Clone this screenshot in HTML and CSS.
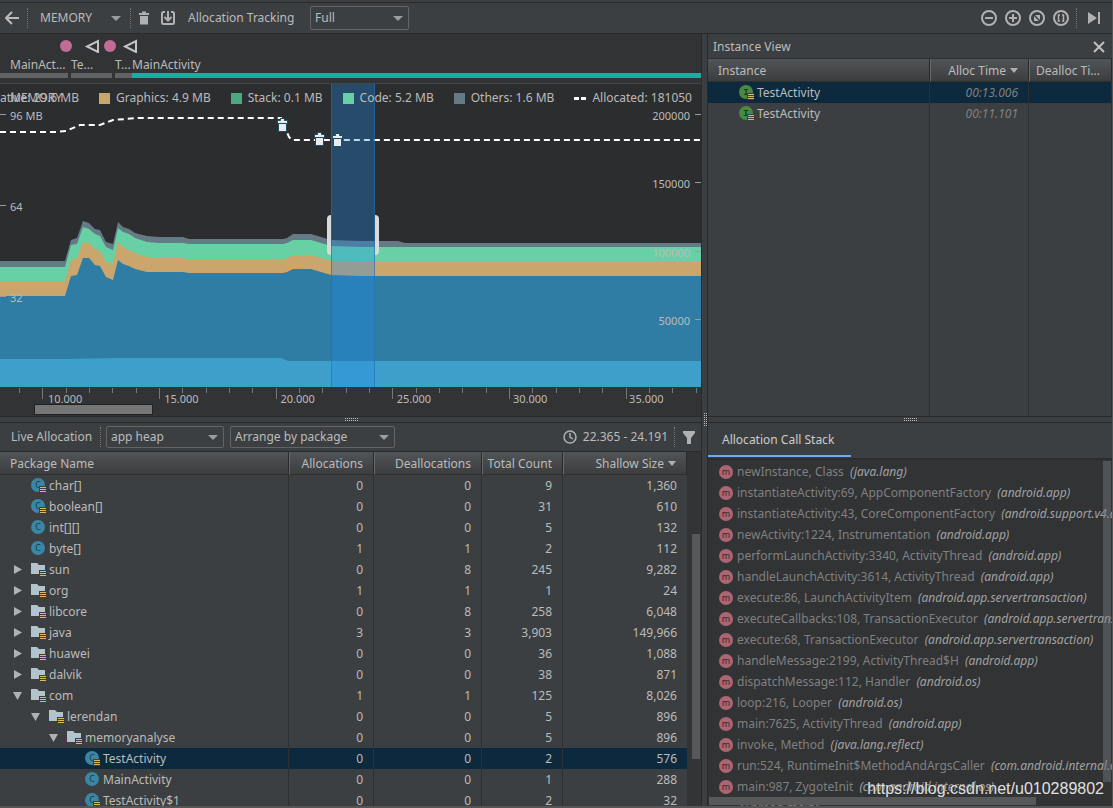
FILE: index.html
```html
<!DOCTYPE html>
<html lang="en">
<head>
  <meta charset="UTF-8" />
  <meta name="viewport" content="width=device-width, initial-scale=1.0"/>
  <title>Memory Profiler</title>
  <link rel="stylesheet" href="styles.css">
</head>
<body>
  <!-- Icon set -->
  <svg class="defs" aria-hidden="true">
    <symbol id="i-class" viewBox="0 0 15 15">
      <circle cx="7" cy="7" r="7" fill="#3a86a5"/>
      <text x="7" y="10" class="glyph" fill="#1f3a47">C</text>
    </symbol>
    <symbol id="i-lines" viewBox="0 0 15 15">
      <path d="M8 8h7v7H8z" fill="#3c3f41"/>
      <path d="M9 9.500h6M9 11.500h6M9 13.500h6" stroke="#e6b45f" fill="none"/>
    </symbol>
    <symbol id="i-folder" viewBox="0 0 15 15">
      <path d="M0 1h6l2 2h6v9H0z" fill="#b3c3cb"/>
    </symbol>
    <symbol id="i-inst" viewBox="0 0 15 15">
      <circle cx="7" cy="7" r="7" fill="#4a8a40"/>
      <text x="7" y="10" class="glyph mono" fill="#1f3a1d">I</text>
    </symbol>
    <symbol id="i-method" viewBox="0 0 14 14">
      <circle cx="7" cy="7" r="7" fill="#ac6572"/>
      <text x="7" y="10" class="glyph" fill="#3a2629">m</text>
    </symbol>
    <symbol id="i-trash" viewBox="0 0 10 14">
      <path d="M0 2h3V0.500h4V2h3v2H0zM1 5h8v8.500H1z"/>
    </symbol>
    <symbol id="i-open" viewBox="0 0 9 9"><path d="M0 1h9L4.500 9z" fill="#afb1b3"/></symbol>
    <symbol id="i-closed" viewBox="0 0 9 9"><path d="M1 0l8 4.500L1 9z" fill="#afb1b3"/></symbol>
  </svg>

  <div class="app">
    <div class="strip"></div>

    <header class="toolbar">
      <button class="icon-btn" aria-label="Back">
        <svg width="14" height="14" viewBox="0 0 14 14"><path d="M14 7H1.500M7 1L1 7l6 6" fill="none" stroke="#bbb" stroke-width="2"/></svg>
      </button>
      <span class="sep"></span>
      <label class="combo plain">
        <select aria-label="Profiler"><option>MEMORY</option></select>
      </label>
      <span class="sep"></span>
      <button class="icon-btn" aria-label="Force garbage collection">
        <svg width="10" height="14" fill="#afb1b3"><use href="#i-trash"/></svg>
      </button>
      <button class="icon-btn" aria-label="Dump Java heap">
        <svg width="14" height="14" viewBox="0 0 14 14" fill="none" stroke="#afb1b3" stroke-width="2"><path d="M4 1H2.500Q1 1 1 2.500v9Q1 13 2.500 13h9q1.500 0 1.500-1.500v-9Q13 1 11.500 1H10M7 0v9M3.500 6L7 9.500 10.500 6"/></svg>
      </button>
      <label for="tracking" class="tracking">Allocation Tracking</label>
      <span class="combo full"><select id="tracking"><option>Full</option></select></span>
      <div class="zoom-tools">
        <button class="icon-btn" aria-label="Zoom out">
          <svg width="16" height="16" viewBox="0 0 16 16" class="line"><circle cx="8" cy="8" r="7"/><path d="M4 8h8"/></svg>
        </button>
        <button class="icon-btn" aria-label="Zoom in">
          <svg width="16" height="16" viewBox="0 0 16 16" class="line"><circle cx="8" cy="8" r="7"/><path d="M4 8h8M8 4v8"/></svg>
        </button>
        <button class="icon-btn" aria-label="Reset zoom">
          <svg width="16" height="16" viewBox="0 0 16 16" class="line"><circle cx="8" cy="8" r="7"/><path d="M5 6v5h5zM6 5h5v5z" fill="#afb1b3" stroke="none"/></svg>
        </button>
        <button class="icon-btn" aria-label="Zoom to selection">
          <svg width="16" height="16" viewBox="0 0 16 16" class="line"><circle cx="8" cy="8" r="7"/><path d="M7 5H5.500v6H7M9 5h1.500v6H9" stroke-width="1.500"/></svg>
        </button>
        <span class="sep"></span>
        <button class="icon-btn live" aria-label="Go live">
          <svg width="13" height="12" viewBox="0 0 13 12" fill="#afb1b3"><path d="M0 0l9 6-9 6zM10 0h2v12h-2z"/></svg>
        </button>
      </div>
    </header>

    <main class="main">
      <section class="col">
        <div class="upper stage">
          <div class="lanes">
            <svg class="events" width="140" height="14" viewBox="0 0 140 14">
              <circle cx="66" cy="7" r="6" fill="#c06c94"/>
              <circle cx="110" cy="7" r="6" fill="#c06c94"/>
              <path d="M98 2v11L87 7.500zM136 2v11L125 7.500z" fill="none" stroke="#c4c4c4" stroke-width="2"/>
            </svg>
            <div class="acts">
              <div class="act a1">MainAct...</div>
              <div class="act a2">Te...</div>
              <div class="act a3">T...</div>
              <div class="act a4">MainActivity</div>
            </div>
          </div>

          <div class="chart">
            <svg class="plot" viewBox="0 0 701 303" preserveAspectRatio="none">
              <path fill="#647a84" d="M0 177H65L71 156 77 154 83 137 89 139 95 145 100 146 106 158 113 160 118 138 123 143 129 145 135 149 147 152 159 153H183L189 155H283L287 154 293 150H311L331 156 360 157H398L405 159H701V303H0z"/>
              <path fill="#67d1a5" d="M0 183H65L71 161 77 160 83 143 89 145 95 150 100 152 106 163 113 166 118 144 123 148 129 150 135 154 147 158 159 159H183L189 160H283L287 159 293 156H311L331 162 360 163H701V303H0z"/>
              <path fill="#caa66c" d="M0 197H65L71 176 77 174 83 158 89 159 95 165 100 167 106 178 113 180 118 158 123 163 129 166 135 169 147 173 159 174H183L189 175H283L287 174 293 171H311L331 177 360 178H701V303H0z"/>
              <path fill="#2f7da4" d="M0 212H65L71 192 77 191 83 174H89L95 181 100 182 106 193 113 196 118 176 123 180 129 182 135 185 147 188H183L189 189H283L287 188 293 185H311L331 191 360 192H701V303H0z"/>
              <path fill="#3e9fcb" d="M0 275H65L118 274H281L288 277H701V303H0z"/>
              <path d="M0 48H55L66 47 80 41H100L113 36 138 34H281L289 53 292 56H701" fill="none" stroke="#fff" stroke-width="2" stroke-dasharray="6 4"/>
              <path fill="#1f8bec" fill-opacity=".32" d="M331 0h44v303h-44z"/>
              <path fill="none" stroke="#1f6fb0" stroke-opacity=".6" d="M331.500 0v303M374.500 0v303"/>
              <path fill="#dadada" d="M331 131v40q-4 0-4-4v-32q0-4 4-4zM375 131v40q4 0 4-4v-32q0-4-4-4z"/>
              <g fill="#e8ecef" stroke="#1d4d63">
                <path d="M277.500 36.500h3v-2h4v2h3v3h-1v8h-8v-8h-1zM278 39.500h9"/>
                <path d="M314.500 50.500h3v-2h4v2h3v3h-1v8h-8v-8h-1zM315 53.500h9"/>
                <path d="M332.500 51.500h3v-2h4v2h3v3h-1v8h-8v-8h-1zM333 54.500h9"/>
              </g>
            </svg>
            <div class="chart-title">MEMORY</div>
            <div class="legend">
              <span class="key native">Native: 29.6 MB</span>
              <span class="key graphics">Graphics: 4.9 MB</span>
              <span class="key stack">Stack: 0.1 MB</span>
              <span class="key code">Code: 5.2 MB</span>
              <span class="key others">Others: 1.6 MB</span>
              <span class="key allocated">Allocated: 181050</span>
            </div>
            <div class="y-axis left">
              <span>96 MB</span><span>64</span><span>32</span>
            </div>
            <div class="y-axis right">
              <span>200000</span><span>150000</span><span>100000</span><span>50000</span>
            </div>
          </div>

          <div class="x-axis">
            <svg class="ticks" viewBox="0 0 701 12" preserveAspectRatio="none">
              <path stroke="#777" fill="none" d="M19.500 0v5M42.500 0v11M66.500 0v5M89.500 0v5M112.500 0v5M136.500 0v5M159.500 0v11M182.500 0v5M206.500 0v5M229.500 0v5M252.500 0v5M276.500 0v11M299.500 0v5M322.500 0v5M346.500 0v5M369.500 0v5M392.500 0v11M416.500 0v5M439.500 0v5M462.500 0v5M486.500 0v5M509.500 0v11M532.500 0v5M556.500 0v5M579.500 0v5M602.500 0v5M626.500 0v11M649.500 0v5M672.500 0v5M696.500 0v5"/>
            </svg>
            <div class="times">
              <span>10.000</span><span>15.000</span><span>20.000</span><span>25.000</span><span>30.000</span><span>35.000</span>
            </div>
            <div class="thumb"></div>
          </div>
        </div>

        <div class="splitter"><i></i></div>

        <div class="lower">
          <div class="bar">
            <span class="bar-title">Live Allocation</span>
            <span class="sep"></span>
            <span class="combo heap"><select aria-label="Heap"><option>app heap</option></select></span>
            <span class="combo arrange"><select aria-label="Arrange"><option>Arrange by package</option></select></span>
            <span class="range">
              <svg width="14" height="14" viewBox="0 0 14 14" fill="none" stroke="#afb1b3" stroke-width="1.500"><circle cx="7" cy="7" r="6"/><path d="M7 3v4l3 2"/></svg>
              22.365 - 24.191
            </span>
            <span class="sep"></span>
            <button class="icon-btn" aria-label="Filter">
              <svg width="12" height="13" viewBox="0 0 12 13" fill="#afb1b3"><path d="M0 0h12v2L8 7v6H4V7L0 2z"/></svg>
            </button>
          </div>
          <div class="grid-wrap">
            <table class="grid heap-grid">
              <colgroup><col><col class="w-alloc"><col class="w-dealloc"><col class="w-total"><col class="w-size"></colgroup>
              <thead>
                <tr><th>Package Name</th><th>Allocations</th><th>Deallocations</th><th>Total Count</th><th class="sorted">Shallow Size</th></tr>
              </thead>
              <tbody>
                <tr><td><div class="node"><i></i><svg><use href="#i-class"/><use href="#i-lines"/></svg>char[]</div></td><td>0</td><td>0</td><td>9</td><td>1,360</td></tr>
                <tr><td><div class="node"><i></i><svg><use href="#i-class"/><use href="#i-lines"/></svg>boolean[]</div></td><td>0</td><td>0</td><td>31</td><td>610</td></tr>
                <tr><td><div class="node"><i></i><svg><use href="#i-class"/></svg>int[][]</div></td><td>0</td><td>0</td><td>5</td><td>132</td></tr>
                <tr><td><div class="node"><i></i><svg><use href="#i-class"/></svg>byte[]</div></td><td>1</td><td>1</td><td>2</td><td>112</td></tr>
                <tr><td><div class="node"><button aria-label="Expand sun"><svg><use href="#i-closed"/></svg></button><svg><use href="#i-folder"/><use href="#i-lines"/></svg>sun</div></td><td>0</td><td>8</td><td>245</td><td>9,282</td></tr>
                <tr><td><div class="node"><button aria-label="Expand org"><svg><use href="#i-closed"/></svg></button><svg><use href="#i-folder"/><use href="#i-lines"/></svg>org</div></td><td>1</td><td>1</td><td>1</td><td>24</td></tr>
                <tr><td><div class="node"><button aria-label="Expand libcore"><svg><use href="#i-closed"/></svg></button><svg><use href="#i-folder"/><use href="#i-lines"/></svg>libcore</div></td><td>0</td><td>8</td><td>258</td><td>6,048</td></tr>
                <tr><td><div class="node"><button aria-label="Expand java"><svg><use href="#i-closed"/></svg></button><svg><use href="#i-folder"/><use href="#i-lines"/></svg>java</div></td><td>3</td><td>3</td><td>3,903</td><td>149,966</td></tr>
                <tr><td><div class="node"><button aria-label="Expand huawei"><svg><use href="#i-closed"/></svg></button><svg><use href="#i-folder"/><use href="#i-lines"/></svg>huawei</div></td><td>0</td><td>0</td><td>36</td><td>1,088</td></tr>
                <tr><td><div class="node"><button aria-label="Expand dalvik"><svg><use href="#i-closed"/></svg></button><svg><use href="#i-folder"/><use href="#i-lines"/></svg>dalvik</div></td><td>0</td><td>0</td><td>38</td><td>871</td></tr>
                <tr><td><div class="node"><button aria-label="Collapse com"><svg><use href="#i-open"/></svg></button><svg><use href="#i-folder"/><use href="#i-lines"/></svg>com</div></td><td>1</td><td>1</td><td>125</td><td>8,026</td></tr>
                <tr><td><div class="node l1"><button aria-label="Collapse lerendan"><svg><use href="#i-open"/></svg></button><svg><use href="#i-folder"/><use href="#i-lines"/></svg>lerendan</div></td><td>0</td><td>0</td><td>5</td><td>896</td></tr>
                <tr><td><div class="node l2"><button aria-label="Collapse memoryanalyse"><svg><use href="#i-open"/></svg></button><svg><use href="#i-folder"/><use href="#i-lines"/></svg>memoryanalyse</div></td><td>0</td><td>0</td><td>5</td><td>896</td></tr>
                <tr class="selected"><td><div class="node l3"><i></i><svg><use href="#i-class"/><use href="#i-lines"/></svg>TestActivity</div></td><td>0</td><td>0</td><td>2</td><td>576</td></tr>
                <tr><td><div class="node l3"><i></i><svg><use href="#i-class"/></svg>MainActivity</div></td><td>0</td><td>0</td><td>1</td><td>288</td></tr>
                <tr><td><div class="node l3"><i></i><svg><use href="#i-class"/><use href="#i-lines"/></svg>TestActivity$1</div></td><td>0</td><td>0</td><td>2</td><td>32</td></tr>
              </tbody>
            </table>
            <div class="vscroll"><div></div></div>
          </div>
        </div>
      </section>

      <div class="vsplitter"><i></i></div>

      <section class="col">
        <div class="upper">
          <div class="pane-title">
            <span>Instance View</span>
            <button class="icon-btn" aria-label="Close">
              <svg width="12" height="12" viewBox="0 0 12 12"><path d="M1 1l10 10M11 1L1 11" stroke="#c0c0c0" stroke-width="2"/></svg>
            </button>
          </div>
          <table class="grid inst-grid">
            <colgroup><col><col class="w-time"><col class="w-dtime"></colgroup>
            <thead>
              <tr><th>Instance</th><th class="sorted">Alloc Time</th><th class="start">Dealloc Ti...</th></tr>
            </thead>
            <tbody>
              <tr class="selected"><td><div class="node"><svg><use href="#i-inst"/><use href="#i-lines"/></svg>TestActivity</div></td><td>00:13.006</td><td></td></tr>
              <tr><td><div class="node"><svg><use href="#i-inst"/><use href="#i-lines"/></svg>TestActivity</div></td><td>00:11.101</td><td></td></tr>
              <tr class="fill"><td></td><td></td><td></td></tr>
            </tbody>
          </table>
        </div>

        <div class="splitter"><i></i></div>

        <div class="lower">
          <div class="tabs"><button class="tab">Allocation Call Stack</button></div>
          <div class="stack-pane">
            <ul class="frames">
              <li><svg><use href="#i-method"/></svg>newInstance, Class <em>(java.lang)</em></li>
              <li><svg><use href="#i-method"/></svg>instantiateActivity:69, AppComponentFactory <em>(android.app)</em></li>
              <li><svg><use href="#i-method"/></svg>instantiateActivity:43, CoreComponentFactory <em>(android.support.v4.app)</em></li>
              <li><svg><use href="#i-method"/></svg>newActivity:1224, Instrumentation <em>(android.app)</em></li>
              <li><svg><use href="#i-method"/></svg>performLaunchActivity:3340, ActivityThread <em>(android.app)</em></li>
              <li><svg><use href="#i-method"/></svg>handleLaunchActivity:3614, ActivityThread <em>(android.app)</em></li>
              <li><svg><use href="#i-method"/></svg>execute:86, LaunchActivityItem <em>(android.app.servertransaction)</em></li>
              <li><svg><use href="#i-method"/></svg>executeCallbacks:108, TransactionExecutor <em>(android.app.servertransaction)</em></li>
              <li><svg><use href="#i-method"/></svg>execute:68, TransactionExecutor <em>(android.app.servertransaction)</em></li>
              <li><svg><use href="#i-method"/></svg>handleMessage:2199, ActivityThread$H <em>(android.app)</em></li>
              <li><svg><use href="#i-method"/></svg>dispatchMessage:112, Handler <em>(android.os)</em></li>
              <li><svg><use href="#i-method"/></svg>loop:216, Looper <em>(android.os)</em></li>
              <li><svg><use href="#i-method"/></svg>main:7625, ActivityThread <em>(android.app)</em></li>
              <li><svg><use href="#i-method"/></svg>invoke, Method <em>(java.lang.reflect)</em></li>
              <li><svg><use href="#i-method"/></svg>run:524, RuntimeInit$MethodAndArgsCaller <em>(com.android.internal.os)</em></li>
              <li><svg><use href="#i-method"/></svg>main:987, ZygoteInit <em>(com.android.internal.os)</em></li>
              <li><svg viewBox="0 0 14 14"><path d="M2 2h10v2H2zM4 5h6v8H4z" fill="#c9a56b"/></svg>&lt;Thread main&gt;</li>
            </ul>
            <div class="stack-v"></div>
            <div class="stack-h"></div>
            <div class="watermark">https://blog.csdn.net/u010289802</div>
          </div>
        </div>
      </section>
    </main>
  </div>
</body>
</html>
```
FILE: styles.css
```css
* { margin: 0; padding: 0; box-sizing: border-box; }
body {
  font-family: "Noto Sans", "Open Sans", sans-serif;
  font-size: 12px; line-height: 20px;
  background: #3c3f41; color: #bbb; overflow: hidden;
}
button, select { font: inherit; color: inherit; background: none; border: none; }
svg { display: block; flex: none; }
.defs { display: none; }
.glyph { font: 9px "Noto Sans", sans-serif; text-anchor: middle; }
.glyph.mono { font-family: "Liberation Mono", monospace; font-weight: bold; }

.app {
  display: flex; flex-direction: column; height: 100vh;
  border-right: 1px solid #555; border-bottom: 2px solid #555;
}
.strip { flex: none; height: 3px; border-bottom: 1px solid #2b2b2b; }

/* Top toolbar */
.toolbar {
  flex: none; display: flex; align-items: center;
  height: 31px; padding-left: 5px; border-bottom: 1px solid #282a2b;
}
.icon-btn { display: flex; align-items: center; justify-content: center; flex: none; }
.sep { flex: none; width: 1px; height: 20px; border-left: 1px dotted #777; }
.toolbar > .sep { margin: 0 8px; }
.combo { position: relative; flex: none; display: block; height: 24px; }
.combo select {
  appearance: none; width: 100%; height: 100%; padding: 0 4px;
  border: 1px solid #646464; border-radius: 2px;
}
.combo::after {
  content: ""; position: absolute; right: 6px; top: 10px;
  border: 5px solid transparent; border-top: 5px solid #9a9da0; border-bottom: none;
  pointer-events: none;
}
.combo.plain { width: 86px; }
.combo.plain::after { right: 1px; }
.combo.plain select { border: none; }
.combo.full { width: 99px; }
.tracking { margin: 0 11px 0 13px; min-width: 111px; }
.toolbar .icon-btn + .icon-btn { margin-left: 12px; }
.zoom-tools { display: flex; align-items: center; margin-left: auto; padding-right: 11px; }
.zoom-tools .icon-btn + .icon-btn { margin-left: 8px; }
.zoom-tools .sep { margin: 0 11px 0 7px; }
.line { fill: none; stroke: #afb1b3; stroke-width: 2; }

/* Columns */
.main {
  flex: 1; min-height: 0; display: grid;
  grid-template-columns: minmax(0, 701fr) 7px minmax(0, 404fr);
}
.col { display: flex; flex-direction: column; min-height: 0; }
.upper { flex: 382 1 0; min-height: 0; display: flex; flex-direction: column; }
.lower { flex: 383 1 0; min-height: 0; display: flex; flex-direction: column; }
.splitter {
  flex: none; height: 7px; display: flex; justify-content: center; align-items: center;
  border-top: 1px solid #282a2b; border-bottom: 1px solid #282a2b;
}
.splitter i { width: 14px; height: 4px; }
.splitter i, .vsplitter i {
  background: conic-gradient(#bbb 25%, transparent 0) 0 0 / 2px 2px;
}
.vsplitter {
  display: flex; align-items: center; justify-content: center;
  border-left: 1px solid #282a2b; border-right: 1px solid #282a2b;
}
.vsplitter i { width: 4px; height: 14px; }

/* Activity lanes */
.stage { background: #323334; }
.lanes { flex: none; height: 50px; padding-top: 5px; border-bottom: 1px solid #434546; }
.acts { display: flex; line-height: 24px; }
.act { white-space: nowrap; height: 25px; position: relative; }
.act::after {
  content: ""; position: absolute; left: 0; right: 3px; bottom: 0;
  height: 5px; background: #616263;
}
.a1 { width: 71px; padding-left: 10px; }
.a2 { width: 44px; }
.a3 { width: 17px; }
.a3::after { right: 0; }
.a4 { flex: 1; }
.a4::after { right: 0; background: #14b0a0; }

/* Memory chart */
.chart { position: relative; flex: 1; min-height: 0; background: #2c2d2e; overflow: hidden; }
.plot { position: absolute; inset: 0; width: 100%; height: 100%; }
.chart-title { position: absolute; left: 10px; top: 4px; }
.legend {
  position: relative; display: flex; justify-content: flex-end; gap: 20px;
  padding: 4px 9px 0 0; white-space: nowrap;
}
.key { display: flex; align-items: center; gap: 6px; }
.key::before { content: ""; width: 11px; height: 11px; background: #3e9fcb; }
.graphics::before { background: #caa66c; }
.stack::before { background: #49a981; }
.code::before { background: #67d1a5; }
.others::before { background: #647a84; }
.allocated::before {
  width: 12px; height: 3px;
  background: linear-gradient(90deg, #fff 5px, transparent 5px, transparent 7px, #fff 7px);
}
.y-axis {
  position: absolute; top: 10%; font-size: 11px; line-height: 20px;
  display: flex; flex-direction: column;
}
.y-axis span { flex: 1; display: flex; gap: 4px; margin-top: -8px; margin-bottom: 8px; }
.y-axis.left { left: 0; height: 90%; }
.y-axis.right { right: 0; height: 90%; text-align: right; }
.y-axis.right span { flex-direction: row-reverse; gap: 5px; }
.y-axis span::before { content: ""; width: 6px; height: 1px; margin-top: 8px; background: #999; }

/* Time axis */
.x-axis { flex: none; position: relative; height: 29px; }
.ticks { position: absolute; left: 0; top: 1px; width: 100%; height: 12px; }
.times {
  position: relative; display: flex; padding: 4px 0 0 48px;
  font-size: 11px; line-height: 16px; height: 17px;
}
.times span { flex: 0 0 17.8%; }
.thumb {
  position: relative; width: 17%; height: 11px; margin-left: 34px;
  background: #757675; border: 1px solid #222;
}

/* Live allocation toolbar */
.bar {
  flex: none; height: 29px; display: flex; align-items: center;
  padding: 0 6px 0 11px; border-bottom: 1px solid #282a2b;
}
.bar-title { min-width: 83px; }
.bar .sep { margin: 0 5px 0 6px; }
.bar .combo { height: 22px; }
.bar .combo::after { top: 9px; }
.heap { width: 118px; margin-right: 6px; }
.arrange { width: 165px; }
.range { margin-left: auto; display: flex; align-items: center; gap: 6px; }
.bar .icon-btn { margin-left: 3px; }

/* Tables */
.grid-wrap { display: flex; flex: 1; min-height: 0; overflow: hidden; background: #323435; }
.grid {
  border-collapse: separate; border-spacing: 0; table-layout: fixed;
  width: 100%; background: #3c3f41;
}
.grid th {
  height: 23px; font-weight: normal; text-align: right; padding: 2px 11px 0 10px; line-height: 20px;
  background: linear-gradient(#525557, #3b3d3f); border-bottom: 1px solid #2d2f30;
  border-left: 1px solid #66696b; white-space: nowrap;
  box-shadow: inset -1px 0 #282a2b;
}
.grid th:first-child { text-align: left; border-left: none; }
.grid td {
  height: 21px; text-align: right; padding: 0 10px; line-height: 20px;
  border-right: 1px solid #2d2f30;
}
.grid td:first-child { padding: 0; }
.heap-grid { align-self: flex-start; flex: 1; min-width: 0; }
.heap-grid th:nth-child(4) { padding-left: 2px; }
.heap-grid td:last-child { border-right: none; }
.selected td { background: #0d293e; }
.sorted::after {
  content: ""; display: inline-block; margin-left: 4px; vertical-align: 2px;
  border: 4px solid transparent; border-top: 5px solid #afb1b3; border-bottom: none;
}
.w-alloc { width: 85px; }
.w-dealloc { width: 108px; }
.w-total { width: 81px; }
.w-size { width: 124px; }
.node { display: flex; align-items: center; height: 21px; padding-left: 13px; white-space: nowrap; }
.node i, .node button { width: 18px; flex: none; }
.node button svg { width: 9px; height: 9px; margin: 0; }
.node svg { width: 15px; height: 15px; margin-right: 3px; }
.l1 { padding-left: 31px; }
.l2 { padding-left: 49px; }
.l3 { padding-left: 67px; }
.vscroll { flex: none; width: 14px; padding: 82px 1px 0 5px; }
.vscroll div { height: 225px; background: #56585a; }

/* Instance view */
.pane-title {
  flex: none; height: 25px; padding: 1px 7px 0 5px;
  display: flex; align-items: center; justify-content: space-between;
  border-bottom: 1px solid #2d2f30;
}
.inst-grid { flex: 1; height: 100%; }
.inst-grid .node { padding-left: 31px; }
.inst-grid td:nth-child(2) { color: #808080; font-style: italic; }
.inst-grid th.start { text-align: left; padding-left: 6px; padding-right: 4px; }
.inst-grid .fill td { height: auto; }
.w-time { width: 99px; }
.w-dtime { width: 83px; }

/* Call stack */
.tabs { flex: none; height: 37px; border-bottom: 2px solid #2b2d2e; }
.tab { height: 34px; padding: 2px 17px 0 14px; color: #ccc; border-bottom: 2px solid #6fa8f5; }
.stack-pane { position: relative; flex: 1; min-height: 0; overflow: hidden; background: #313335; }
.frames { list-style: none; padding: 1px 0 0 11px; color: #808080; }
.frames li { display: flex; align-items: center; height: 21px; white-space: pre; }
.frames svg { width: 14px; height: 14px; margin-right: 4px; }
.frames em { color: #a2a2a2; margin-left: 3px; }
.stack-v {
  position: absolute; right: 1px; top: 1px; width: 8px; bottom: 24px;
  background: rgba(120, 122, 124, 0.45);
}
.stack-h {
  position: absolute; left: 1px; bottom: 1px; width: 81%; height: 8px;
  background: #56585a;
}
.watermark {
  position: absolute; right: 8px; bottom: 7px;
  font: 16px/20px "Liberation Sans", Arial, sans-serif;
  color: #e0e0e0; text-shadow: 0 0 1px #333;
}
```
